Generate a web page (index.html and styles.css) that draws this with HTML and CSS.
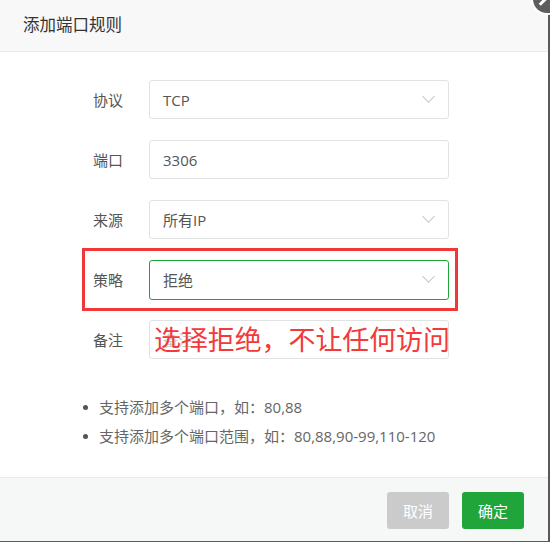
FILE: index.html
```html
<!DOCTYPE html>
<html lang="zh">
<head>
<meta charset="utf-8">
<title>添加端口规则</title>
<link rel="stylesheet" href="styles.css">
</head>
<body>
<div class="dialog">
  <div class="header">添加端口规则</div>
  <div class="content">
    <div class="row">
      <span class="label">协议</span>
      <div class="field select"><span class="val">TCP</span><span class="chev"></span></div>
    </div>
    <div class="row">
      <span class="label">端口</span>
      <div class="field"><span class="val">3306</span></div>
    </div>
    <div class="row">
      <span class="label">来源</span>
      <div class="field select"><span class="val">所有IP</span><span class="chev"></span></div>
    </div>
    <div class="row hl">
      <span class="label">策略</span>
      <div class="field select active"><span class="val">拒绝</span><span class="chev"></span></div>
      <div class="redbox"></div>
    </div>
    <div class="row note">
      <span class="label">备注</span>
      <div class="field"><span class="val ph">备注</span></div>
      <div class="annot">选择拒绝，不让任何访问</div>
    </div>
    <ul class="tips">
      <li>支持添加多个端口，如：80,88</li>
      <li>支持添加多个端口范围，如：80,88,90-99,110-120</li>
    </ul>
  </div>
  <div class="footer">
    <button class="btn cancel">取消</button>
    <button class="btn ok">确定</button>
  </div>
  <div class="close"><span class="x"></span></div>
</div>
</body>
</html>
```

FILE: styles.css
```css
html, body {
  margin: 0;
  padding: 0;
  background: #fff;
  overflow: hidden;
}
body {
  font-family: "Open Sans", "Noto Sans CJK SC", sans-serif;
  font-size: 15px;
  color: #555;
}
.dialog {
  position: relative;
  width: 548px;
  height: 541px;
  border-right: 2px solid #5a5a5a;
  border-bottom: 1px solid #5a5a5a;
  display: flex;
  flex-direction: column;
  background: #fff;
}
.header {
  height: 51px;
  line-height: 50px;
  padding-left: 23px;
  background: #f8f8f8;
  border-bottom: 1px solid #eaeaea;
  font-size: 16.5px;
  color: #333;
  flex: none;
}
.content {
  flex: 1;
  padding-top: 28px;
}
.row {
  position: relative;
  display: flex;
  align-items: center;
  height: 39px;
  margin-bottom: 21px;
  padding-left: 93px;
}
.label {
  width: 56px;
  color: #555;
  font-size: 15px;
}
.field {
  box-sizing: border-box;
  width: 300px;
  height: 39px;
  border: 1px solid #e2e2e2;
  border-radius: 3px;
  display: flex;
  align-items: center;
  justify-content: space-between;
  padding: 0 13px 0 13px;
  color: #555;
}
.field.active {
  border-color: #20a53a;
}
.val.ph {
  color: #c8c8c8;
}
.chev {
  width: 8px;
  height: 8px;
  border-right: 1px solid #c2c2c2;
  border-bottom: 1px solid #c2c2c2;
  transform: rotate(45deg);
  margin-top: -6px;
  margin-right: 2px;
}
.hl .field {
  height: 40px;
}
.redbox {
  position: absolute;
  left: 82px;
  top: -12px;
  width: 376px;
  height: 63px;
  box-sizing: border-box;
  border: 3px solid #f03838;
  pointer-events: none;
}
.annot {
  position: absolute;
  left: 154px;
  top: 0;
  line-height: 38px;
  font-family: "Noto Sans CJK SC", sans-serif;
  font-size: 27px;
  color: #f23a3a;
  white-space: nowrap;
  letter-spacing: -0.1px;
}
.tips {
  margin: 34px 0 0 0;
  padding: 0 0 0 99px;
  color: #666;
  font-size: 15px;
}
.tips li {
  line-height: 29px;
  list-style: none;
  position: relative;
}
.tips li::before {
  content: "";
  position: absolute;
  left: -16px;
  top: 12px;
  width: 5px;
  height: 5px;
  border-radius: 50%;
  background: #555;
}
.footer {
  flex: none;
  height: 64px;
  background: #f6f8f8;
  border-top: 1px solid #eaeaea;
  display: flex;
  justify-content: flex-end;
  align-items: flex-start;
  gap: 13px;
  padding: 14px 24px 0 0;
  box-sizing: border-box;
}
.btn {
  width: 62px;
  height: 37px;
  border: none;
  border-radius: 3px;
  color: #fff;
  font-family: "Noto Sans CJK SC", sans-serif;
  font-size: 15px;
  padding: 0;
}
.cancel { background: #cbcbcb; }
.ok { background: #20a53a; }
.close {
  position: absolute;
  left: 531px;
  top: -17px;
  width: 28px;
  height: 28px;
  border-radius: 50%;
  background: #5e5e5e;
  border: 2px solid #fff;
}
.close .x {
  position: absolute;
  left: 5px;
  top: 14px;
  width: 12px;
  height: 3px;
  background: #fff;
  transform: rotate(-45deg);
}
```
